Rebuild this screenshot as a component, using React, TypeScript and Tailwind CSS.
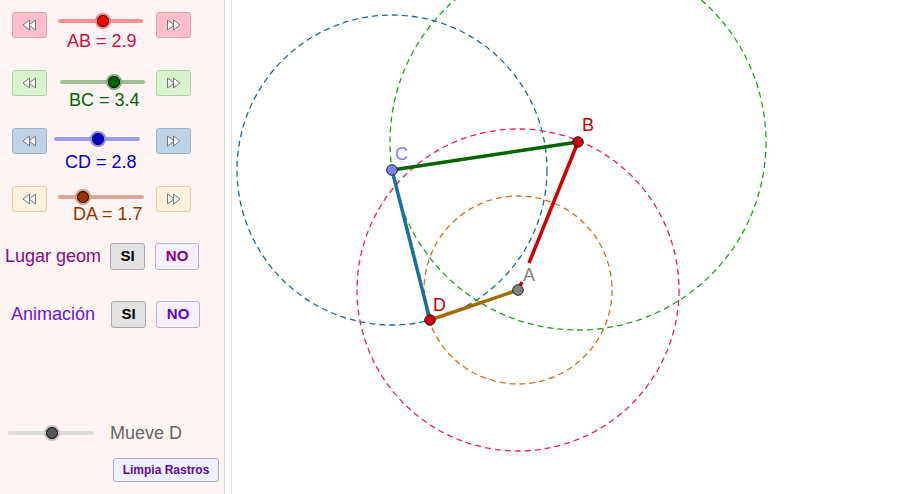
import React from 'react'

const font = { fontFamily: '"Liberation Sans", Arial, sans-serif' }

interface SliderRowProps {
  label: string
  btnClass: string
  trackClass: string
  trackColor: string
  haloColor: string
  knobColor: string
  knobAt: number
  labelClass: string
  rowClass: string
}

const StepIcon = ({ dir }: { dir: 'left' | 'right' }) => (
  <svg width="15" height="12" viewBox="0 0 15 12" className={dir === 'right' ? 'scale-x-[-1]' : ''}>
    <polygon points="1,6 7.5,1 7.5,11" fill="#f8f8f8" stroke="#777" strokeWidth="1" />
    <polygon points="7,6 13.5,1 13.5,11" fill="#f8f8f8" stroke="#777" strokeWidth="1" />
  </svg>
)

const Knob = ({ at, halo, color }: { at: number; halo: string; color: string }) => (
  <svg width="18" height="18" viewBox="0 0 18 18" className="absolute top-[-7px]" style={{ left: at - 9 }}>
    <circle cx="9" cy="9" r="8" fill={halo} />
    <circle cx="9" cy="9" r="5.5" fill={color} stroke="#000" strokeWidth="1" />
  </svg>
)

const SliderRow = (p: SliderRowProps) => (
  <div className={`flex items-start pl-[12px] ${p.rowClass}`}>
    <button className={`w-[35px] h-[26px] rounded-[3px] border flex items-center justify-center ${p.btnClass}`}>
      <StepIcon dir="left" />
    </button>
    <div className="w-[109px] flex flex-col">
      <div className={`relative h-[4px] rounded-full ${p.trackClass}`} style={{ background: p.trackColor }}>
        <Knob at={p.knobAt} halo={p.haloColor} color={p.knobColor} />
      </div>
      <div className={`text-[18px] leading-[20px] whitespace-nowrap ${p.labelClass}`} style={font}>
        {p.label}
      </div>
    </div>
    <button className={`w-[35px] h-[26px] rounded-[3px] border flex items-center justify-center ${p.btnClass}`}>
      <StepIcon dir="right" />
    </button>
  </div>
)

const ToggleRow = ({ text, textClass, noClass, rowClass, siClass }: { text: string; textClass: string; noClass: string; rowClass: string; siClass: string }) => (
  <div className={`flex items-center h-[28px] ${rowClass}`} style={font}>
    <div className={`text-[18px] whitespace-nowrap ${textClass}`}>{text}</div>
    <button className={`w-[35px] h-[27px] rounded-[3px] border border-[#a8a8a8] bg-[#e2e2e2] text-[15px] font-bold text-black ${siClass}`}>
      SI
    </button>
    <button className={`ml-[10px] w-[44px] h-[27px] rounded-[3px] border border-[#b8b0c8] bg-[#f7f0ff] text-[15px] font-bold ${noClass}`}>
      NO
    </button>
  </div>
)

const Canvas = () => {
  const A = [517, 290]
  const B = [577, 142]
  const C = [391, 170]
  const D = [429, 320]
  const dash = '6 4'
  return (
    <svg width="684" height="494" viewBox="231 0 684 494" className="block shrink-0">
      <circle cx={C[0]} cy={C[1]} r="155" fill="none" stroke="#1d6a96" strokeWidth="1.3" strokeDasharray={dash} />
      <circle cx={B[0]} cy={B[1]} r="188" fill="none" stroke="#22a020" strokeWidth="1.3" strokeDasharray={dash} />
      <circle cx={A[0]} cy={A[1]} r="161" fill="none" stroke="#ea2250" strokeWidth="1.3" strokeDasharray={dash} />
      <circle cx={A[0]} cy={A[1]} r="94" fill="none" stroke="#cc7020" strokeWidth="1.3" strokeDasharray={dash} />

      <line x1={B[0]} y1={B[1]} x2="528" y2="263" stroke="#cc0000" strokeWidth="3.5" />
      <line x1="521" y1="282" x2={A[0]} y2={A[1]} stroke="#cc0000" strokeWidth="3.5" />
      <line x1={B[0]} y1={B[1]} x2={C[0]} y2={C[1]} stroke="#006400" strokeWidth="3.6" />
      <line x1={C[0]} y1={C[1]} x2={D[0]} y2={D[1]} stroke="#1a6fa0" strokeWidth="3.5" />
      <line x1={D[0]} y1={D[1]} x2={A[0]} y2={A[1]} stroke="#a06c00" strokeWidth="3.5" />

      <circle cx={A[0]} cy={A[1]} r="5.3" fill="#808080" stroke="#222" strokeWidth="1" />
      <circle cx={B[0]} cy={B[1]} r="5.3" fill="#cc0000" stroke="#222" strokeWidth="1" />
      <circle cx={C[0]} cy={C[1]} r="5.3" fill="#8080ff" stroke="#222" strokeWidth="1" />
      <circle cx={D[0]} cy={D[1]} r="5.3" fill="#cc0000" stroke="#222" strokeWidth="1" />

      <g style={font} fontSize="18">
        <text x="522" y="281" fill="#808080">A</text>
        <text x="581" y="131" fill="#cc0000">B</text>
        <text x="394" y="160" fill="#8080ff">C</text>
        <text x="432" y="311" fill="#cc0000">D</text>
      </g>
    </svg>
  )
}

export default function App() {
  return (
    <div className="w-[916px] h-[494px] flex bg-white overflow-hidden">
      <div className="w-[225px] h-full shrink-0 bg-[#fff4f4] border-r border-[#d6d6d6] flex flex-col pt-[12px]">
        <SliderRow
          label="AB = 2.9"
          rowClass="h-[58px]"
          btnClass="bg-[#ffc0cb] border-[#dea3ad]"
          trackClass="ml-[11px] w-[85px] mt-[7px]"
          trackColor="#ff9090"
          haloColor="#ff8080"
          knobColor="#ff0000"
          knobAt={45}
          labelClass="mt-[8px] ml-[20px] text-[#cc1040]"
        />
        <SliderRow
          label="BC = 3.4"
          rowClass="h-[58px]"
          btnClass="bg-[#d6f5cb] border-[#a9cca2]"
          trackClass="ml-[13px] w-[85px] mt-[10px]"
          trackColor="#9cbf98"
          haloColor="#7fab7f"
          knobColor="#006400"
          knobAt={54}
          labelClass="mt-[6px] ml-[22px] text-[#006400]"
        />
        <SliderRow
          label="CD = 2.8"
          rowClass="h-[58px]"
          btnClass="bg-[#bcd3e9] border-[#9fb3c6]"
          trackClass="ml-[7px] w-[86px] mt-[9px]"
          trackColor="#9d9df0"
          haloColor="#8585f5"
          knobColor="#0000cc"
          knobAt={44}
          labelClass="mt-[11px] ml-[18px] text-[#0000cc]"
        />
        <SliderRow
          label="DA = 1.7"
          rowClass="h-[56px]"
          btnClass="bg-[#fff2dc] border-[#e0cdb0]"
          trackClass="ml-[11px] w-[86px] mt-[9px]"
          trackColor="#d8aa9a"
          haloColor="#d49a80"
          knobColor="#993300"
          knobAt={25}
          labelClass="mt-[5px] ml-[26px] text-[#993300]"
        />
        <ToggleRow
          text="Lugar geom"
          rowClass="pl-[5px]"
          siClass="ml-[9px]"
          textClass="text-[#880a88]"
          noClass="text-[#880088]"
        />
        <ToggleRow
          text="Animación"
          rowClass="mt-[30px] pl-[11px]"
          siClass="ml-[16px]"
          textClass="text-[#6a14d4]"
          noClass="text-[#6600cc]"
        />
        <div className="mt-[93px] h-[24px] flex items-center pl-[8px]" style={font}>
          <div className="relative w-[86px] h-[4px] rounded-full bg-[#dcdcdc]">
            <Knob at={44} halo="#c4c4c4" color="#555555" />
          </div>
          <div className="ml-[16px] text-[18px] text-[#666]">Mueve D</div>
        </div>
        <div className="mt-[11px] pl-[113px]">
          <button
            className="w-[106px] h-[24px] rounded-[3px] border border-[#aaaac6] bg-[#eef0ff] text-[12px] font-bold text-[#5c0c98]"
            style={font}
          >
            Limpia Rastros
          </button>
        </div>
      </div>
      <div className="w-[7px] shrink-0 bg-white border-r border-[#e4e4e4]" />
      <Canvas />
    </div>
  )
}
